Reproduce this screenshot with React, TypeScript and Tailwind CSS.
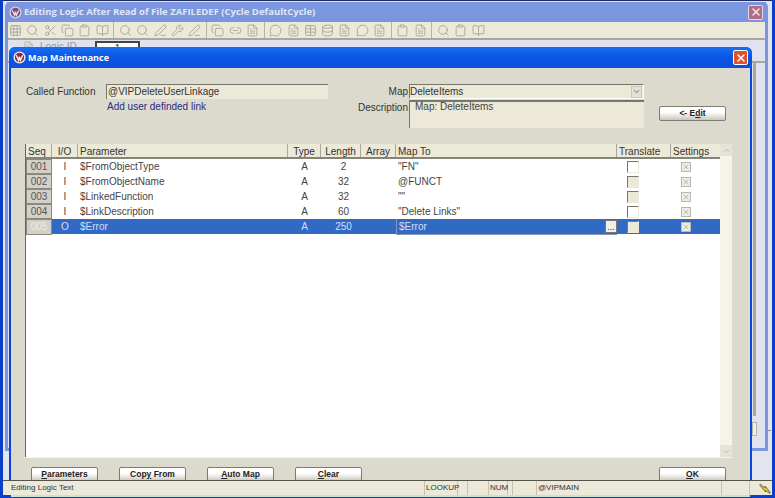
import type React from "react"
import { BookOpen, ChevronDown, ChevronUp, Clipboard, Copy, Database, FileText, Grid3x3, Link2, MessageCircle, PenLine, Scissors, Search, Table, Wrench, X } from "lucide-react"

const font = "font-['Liberation_Sans',sans-serif]"

const toolbarGroups = [
  [Grid3x3, Search, Scissors, Copy, Clipboard, BookOpen],
  [Search, Search, PenLine, Wrench, PenLine],
  [Copy, Link2, FileText],
  [MessageCircle, FileText, Table, Database, FileText, MessageCircle, FileText],
  [Clipboard, FileText],
  [Search, Clipboard, BookOpen],
]

const rows = [
  { seq: "001", io: "I", param: "$FromObjectType", type: "A", length: "2", map: '"FN"', translate: "white" },
  { seq: "002", io: "I", param: "$FromObjectName", type: "A", length: "32", map: "@FUNCT", translate: "beige" },
  { seq: "003", io: "I", param: "$LinkedFunction", type: "A", length: "32", map: '""', translate: "beige" },
  { seq: "004", io: "I", param: "$LinkDescription", type: "A", length: "60", map: '"Delete Links"', translate: "white" },
  { seq: "005", io: "O", param: "$Error", type: "A", length: "250", map: "$Error", translate: "beige", selected: true },
]

const columns = "grid grid-cols-[26px_26px_210px_33px_40px_35px_221px_54px_49px]"

function AppIcon({ faded }: { faded?: boolean }) {
  return (
    <svg width="13" height="13" viewBox="0 0 14 14" className={`shrink-0 ${faded ? "opacity-70" : ""}`}>
      <circle cx="7" cy="7" r="6.5" fill="#f4eeee" />
      <circle cx="7" cy="7" r="5" fill="#8c2a3c" />
      <path d="M3.5 4.5 L6 10 L7 6 L8 10 L10.5 4.5" stroke="#fff" strokeWidth="1.4" fill="none" />
    </svg>
  )
}

function Toolbar() {
  return (
    <div className="flex h-[18px] items-center border-b-2 border-[#a9a89e] bg-[#ece9d8] pl-0">
      {toolbarGroups.map((group, i) => (
        <div key={i} className="flex items-center border-r border-[#b5b3a6] px-[2.5px] first:-ml-[1px] first:pl-0 last:border-r-0">
          {group.map((Icon, j) => (
            <span key={j} className="flex h-[16px] w-[17.3px] items-center justify-center">
              <Icon size={13} strokeWidth={1.7} className="text-[#a8a69c]" />
            </span>
          ))}
        </div>
      ))}
    </div>
  )
}

function DialogButton({ children, className = "" }: { children: React.ReactNode; className?: string }) {
  return (
    <button className={`h-[15px] w-[67px] shrink-0 rounded-[2px] border border-[#7d7c74] bg-gradient-to-b from-white from-40% to-[#c9c7bb] pb-[1px] text-center text-[8.5px] leading-[11px] font-bold text-[#222] ${className}`}>
      {children}
    </button>
  )
}

function TableHeader() {
  const labels = ["Seq", "I/O", "Parameter", "Type", "Length", "Array", "Map To", "Translate", "Settings"]
  const centered = [1, 3, 4, 5]
  return (
    <div className={`${columns} h-[15px] border-b-2 border-[#85847a] bg-[#ece9d8]`}>
      {labels.map((label, i) => (
        <div key={label} className={`flex h-[13px] items-center border-r border-[#a9a89e] px-[2px] pt-[1px] text-[10px] leading-[13px] text-[#333] last:border-r-0 ${centered.includes(i) ? "justify-center" : ""}`}>
          {label}
        </div>
      ))}
    </div>
  )
}

function Row({ row }: { row: (typeof rows)[number] }) {
  const text = row.selected ? "text-[#d5def2]" : "text-[#444]"
  return (
    <div className={`${columns} h-[15px] text-[10px] leading-[15px] ${row.selected ? "bg-[#316ac5]" : "bg-white"} ${text}`}>
      <div className={`border border-[#8a8980] bg-[#d4d0c8] text-center leading-[13px] ${row.selected ? "text-[#ecebe4]" : "text-[#555]"}`}>{row.seq}</div>
      <div className="text-center">{row.io}</div>
      <div className="pl-[2px]">{row.param}</div>
      <div className="text-center">{row.type}</div>
      <div className="pl-[5px] text-center">{row.length}</div>
      <div />
      <div className={`flex items-center justify-between pl-[2px] ${row.selected ? "border-b border-l border-[#8a97b4]" : ""}`}>
        <span>{row.map}</span>
        {row.selected && (
          <span className="flex h-[13px] w-[12px] items-end justify-center border border-[#777] bg-[#f1efe6] text-[9px] leading-[10px] text-[#222]">...</span>
        )}
      </div>
      <div className="flex items-center justify-center pr-[23px]">
        <span className={`size-[12px] border border-t-[#77766e] border-l-[#77766e] border-r-[#ece9d8] border-b-[#ece9d8] ${row.translate === "white" ? "bg-white" : "bg-[#ece9d8]"}`} />
      </div>
      <div className="flex items-center justify-center pr-[20px]">
        <span className="flex size-[10px] items-center justify-center border border-[#b8b6ad] bg-[#eeece4]">
          <X size={8} strokeWidth={1.5} className="text-[#8c8b84]" />
        </span>
      </div>
    </div>
  )
}

function MapDialog() {
  return (
    <div className={`absolute top-[46px] left-[9px] flex h-[450px] w-[743px] flex-col overflow-hidden rounded-t-[6px] bg-[#0a45d6] ${font}`}>
      <div className="flex h-[21px] shrink-0 items-center bg-gradient-to-b from-[#1a6ff0] via-[#0a55e5] to-[#0b50dc] pr-[4px] pl-[4px]">
        <AppIcon />
        <span className="ml-[2px] font-['Open_Sans',sans-serif] text-[9px] font-bold text-white">Map Maintenance</span>
        <span className="ml-auto flex size-[15px] items-center justify-center rounded-[2px] border border-white bg-[#e0522c]">
          <X size={12} strokeWidth={3} className="text-white" />
        </span>
      </div>
      <div className="mx-[2px] flex min-h-0 flex-1 flex-col bg-[#dcdacd] px-[14px] pt-[16px]">
        <div className="flex h-[60px] shrink-0 text-[10px] text-[#333]">
          <div className="w-[81px] pl-[1px] leading-[15px]">Called Function</div>
          <div className="w-[222px]">
            <div className="h-[15px] border-t border-l border-[#77766e] border-r-white border-b-white bg-[#ece9d8] pl-[1px] leading-[14px]">@VIPDeleteUserLinkage</div>
            <div className="mt-[1px] pl-[1px] leading-[14px] text-[#2a2a86]">Add user definded link</div>
          </div>
          <div className="ml-[16px] flex w-[65px] flex-col items-end pr-[1px] leading-[15px]">
            <div>Map</div>
            <div className="mt-[1px]">Description</div>
          </div>
          <div className="flex w-[235px] flex-col gap-[1px]">
            <div className="flex h-[15px] items-center justify-between border border-[#77766e] border-r-white border-b-white bg-[#ece9d8] pr-[1px] leading-[13px]">
              <span>DeleteItems</span>
              <span className="flex h-[12px] w-[11px] items-center justify-center border border-[#c8c6ba] bg-[#e4e2d6]">
                <ChevronDown size={9} strokeWidth={3} className="text-[#999]" />
              </span>
            </div>
            <div className="h-[28px] border-t-2 border-l border-[#77766e] border-r-white border-b-white bg-[#ece9d8] pl-[5px] leading-[9px] text-[#444]">Map: DeleteItems</div>
          </div>
          <DialogButton className="mt-[22px] ml-[15px]">&lt;- E<u>d</u>it</DialogButton>
        </div>
        <div className="flex h-[314px] w-[707px] shrink-0 border-b border-[#f4f3ec] bg-white">
          <div className="flex min-w-0 flex-1 flex-col border-l border-[#66655d]">
            <TableHeader />
            {rows.map((row) => (
              <Row key={row.seq} row={row} />
            ))}
          </div>
          <div className="flex w-[12px] flex-col justify-between bg-[#f5f3ea]">
            <span className="flex h-[12px] items-center justify-center bg-[#e6e4da]">
              <ChevronUp size={9} strokeWidth={2} className="text-[#b5b3a8]" />
            </span>
            <span className="flex h-[12px] items-center justify-center bg-[#e6e4da]">
              <ChevronDown size={9} strokeWidth={2} className="text-[#b5b3a8]" />
            </span>
          </div>
        </div>
        <div className="mt-[9px] flex pl-[6px]">
          <div className="flex gap-[21px]">
            <DialogButton><u>P</u>arameters</DialogButton>
            <DialogButton>Cop<u>y</u> From</DialogButton>
            <DialogButton><u>A</u>uto Map</DialogButton>
            <DialogButton><u>C</u>lear</DialogButton>
          </div>
          <DialogButton className="ml-[297px]"><u>O</u>K</DialogButton>
        </div>
      </div>
    </div>
  )
}

function StatusBar() {
  const cell = "flex h-full items-center border-r border-[#c5c2b0] pl-[1px]"
  return (
    <div className={`relative z-10 flex h-[15px] shrink-0 border-t border-[#55544c] bg-[#ece9d8] text-[8px] text-[#333] ${font}`}>
      <div className={`${cell} w-[422px] pl-[8px]`}>Editing Logic Text</div>
      <div className={`${cell} w-[33px]`}>LOOKUP</div>
      <div className={`${cell} w-[10px]`} />
      <div className={`${cell} w-[21px]`} />
      <div className={`${cell} w-[19px]`}>NUM</div>
      <div className={`${cell} w-[5px]`} />
      <div className={`${cell} w-[24px]`} />
      <div className={`${cell} w-[185px]`}>@VIPMAIN</div>
      <div className={`${cell} w-[28px]`} />
      <div className="flex flex-1 items-center pl-[9px]">
        <svg width="12" height="11" viewBox="0 0 12 11">
          <path d="M1 1 L6 5 L6 3 L11 9 L11 10.5 L6.5 7.5 L6.5 9 L1 2.5 Z" fill="#e6d200" stroke="#55544c" strokeWidth="0.8" />
        </svg>
      </div>
    </div>
  )
}

function LogicWindow() {
  return (
    <div className={`absolute top-[1px] left-[5px] flex h-[449px] w-[763px] flex-col rounded-t-[5px] border-x-[3px] border-b-[3px] border-[#7b96de] bg-[#dfe3f0] ${font}`}>
      <div className="-mx-[1px] flex h-[20px] shrink-0 items-center bg-[#7b96de] pr-[3px] pl-[2px]">
        <AppIcon faded />
        <span className="ml-[2px] pt-[1px] font-['Open_Sans',sans-serif] text-[9.5px] font-bold text-[#dfe6f8]">Editing Logic After Read of File ZAFILEDEF (Cycle DefaultCycle)</span>
        <span className="ml-auto flex size-[15px] items-center justify-center rounded-[2px] border border-[#e2d8e6] bg-[#b06a8a]">
          <X size={12} strokeWidth={3} className="text-[#f0e8f0]" />
        </span>
      </div>
      <Toolbar />
      <div className="flex h-[21px] shrink-0 items-start pt-[1px] pl-[15px] text-[10px] text-[#9a9a9a]">
        <FileText size={11} className="text-[#b5b3a8]" />
        <span className="ml-[6px] w-[55px] leading-[12px]">Logic ID</span>
        <span className="h-[6px] w-[45px] border-x-2 border-t-2 border-[#444] bg-white text-center leading-[12px] text-[#333]">1</span>
      </div>
      <div className="flex min-h-0 flex-1 justify-end border-t-2 border-[#a9a89e]">
        <div className="w-[12px]">
          <div className="h-[353px] w-[3px] bg-[#a9a89e]" />
          <div className="mt-[6px] ml-[-1px] h-[14px] w-[5px] border border-[#b5b3a6] bg-[#f0efe9]" />
        </div>
      </div>
    </div>
  )
}

export default function App() {
  return (
    <div className="flex h-[498px] w-[775px] flex-col overflow-hidden border-x-[3px] border-[#0a3fc8] bg-[#e4e4ee]">
      <div className="-mx-[3px] h-[1px] shrink-0 bg-[#1c2a5a]" />
      <div className="relative -mx-[3px] min-h-0 flex-1">
        <LogicWindow />
        <MapDialog />
        <span className="absolute top-[429px] left-[768px] h-[1px] w-[3px] bg-[#888]" />
      </div>
      <StatusBar />
      <div className="-mx-[3px] h-[3px] shrink-0 bg-[#0a3fc8]" />
    </div>
  )
}
